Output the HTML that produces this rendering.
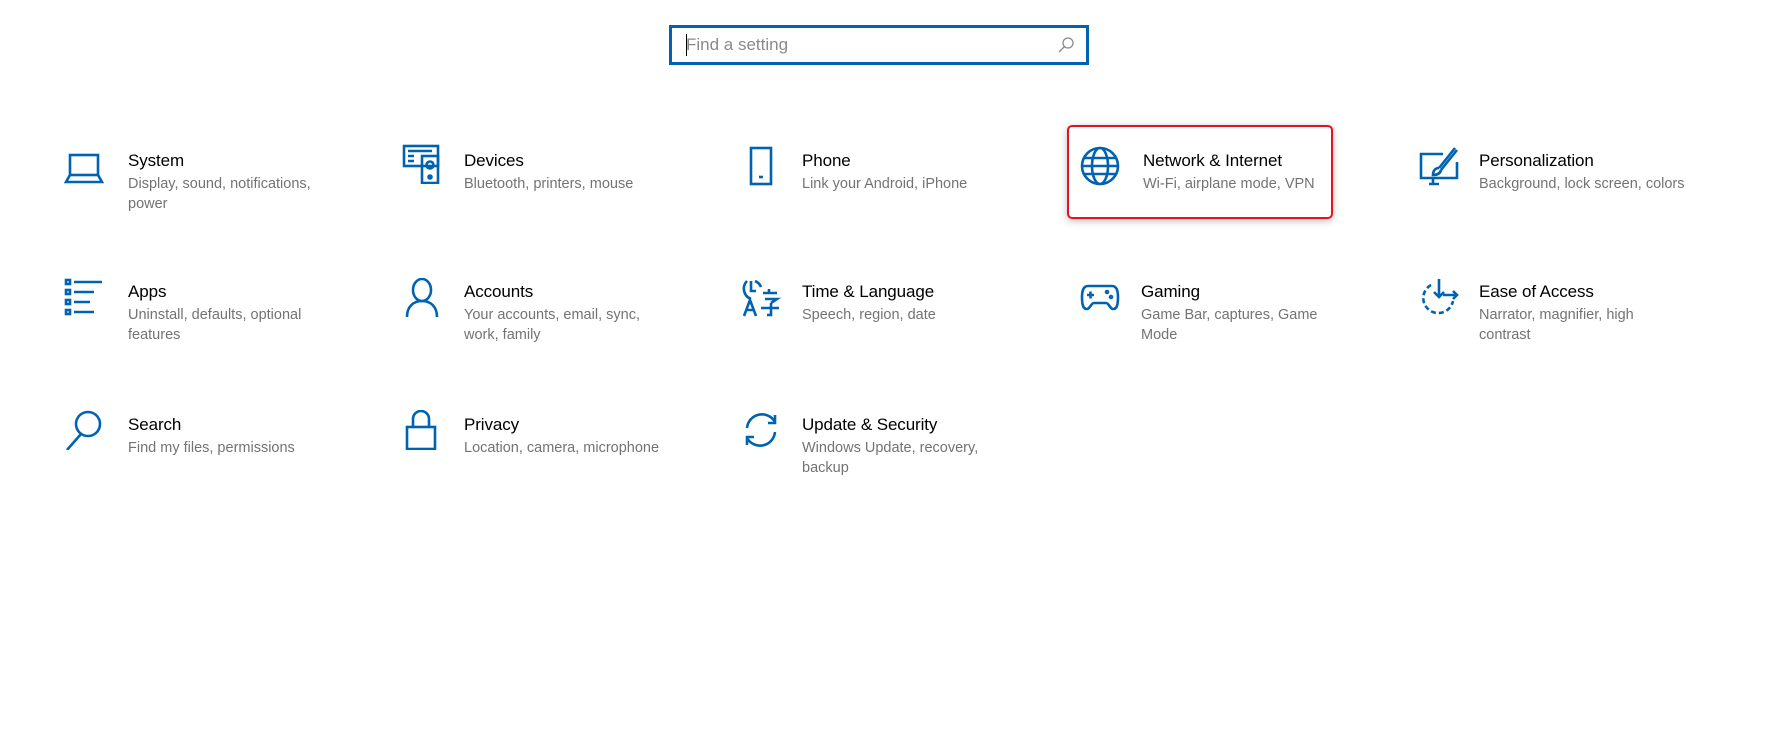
<!DOCTYPE html>
<html><head><meta charset="utf-8"><style>
body{margin:0;width:1770px;height:729px;background:#fff;position:relative;overflow:hidden;font-family:"Liberation Sans",sans-serif}
.search{position:absolute;left:669px;top:25px;width:414px;height:34px;border:3px solid #0063b1;}
.search .ph{position:absolute;left:14px;top:7px;font-size:17px;color:#8a8a8a}
.search .cur{position:absolute;left:14px;top:6px;width:1px;height:22px;background:#000}
.t{position:absolute}
.t .ti{font-size:17px;color:#000;line-height:22px;white-space:nowrap;letter-spacing:-0.1px}
.t .de{font-size:14.5px;color:#737373;line-height:20px;margin-top:2px}
svg.ic{position:absolute;width:40px;height:40px;fill:none;stroke:#0063b1;stroke-width:2.6}
.red{position:absolute;left:1067px;top:125px;width:262px;height:90px;border:2px solid #e81123;border-radius:5px;box-shadow:0 2px 8px rgba(0,0,0,.25)}
</style></head><body>
<div class="search"><div class="cur"></div><div class="ph">Find a setting</div>
<svg style="position:absolute;right:10px;top:7px" width="20" height="20" viewBox="0 0 20 20" fill="none" stroke="#8a8a8a" stroke-width="1.3"><circle cx="12" cy="8" r="5"/><line x1="8.5" y1="11.5" x2="3" y2="17"/></svg></div>
<div class="red"></div>

<svg class="ic" style="left:64px;top:148px" viewBox="0 0 40 40"><rect x="6" y="7" width="28" height="20"/><path d="M6 27 L2 34 H38 L34 27"/></svg>
<div class="t" style="left:128px;top:150px;width:200px"><div class="ti">System</div><div class="de">Display, sound, notifications, power</div></div>

<svg class="ic" style="left:402px;top:144px" viewBox="0 0 40 40"><rect x="2" y="2" width="34" height="20"/><path d="M6 7h24M6 12h6M6 17h6"/><rect x="20" y="12" width="16" height="27"/><circle cx="28" cy="21" r="3.5"/><circle cx="28" cy="33" r="1.5"/></svg>
<div class="t" style="left:464px;top:150px;width:230px"><div class="ti">Devices</div><div class="de">Bluetooth, printers, mouse</div></div>

<svg class="ic" style="left:741px;top:146px" viewBox="0 0 40 40"><rect x="10" y="2" width="20" height="36"/><line x1="18" y1="31" x2="22" y2="31"/></svg>
<div class="t" style="left:802px;top:150px;width:230px"><div class="ti">Phone</div><div class="de">Link your Android, iPhone</div></div>

<svg class="ic" style="left:1080px;top:146px" viewBox="0 0 40 40"><circle cx="20" cy="20" r="18"/><ellipse cx="20" cy="20" rx="8" ry="18"/><line x1="2" y1="20" x2="38" y2="20"/><line x1="4" y1="12" x2="36" y2="12"/><line x1="4" y1="28" x2="36" y2="28"/></svg>
<div class="t" style="left:1143px;top:150px;width:200px"><div class="ti">Network &amp; Internet</div><div class="de">Wi-Fi, airplane mode, VPN</div></div>

<svg class="ic" style="left:1419px;top:146px" viewBox="0 0 40 40"><path d="M24 8H2V32H38V16"/><path d="M14 32v6M10 38h10"/><path d="M36 2L20 22M38 4L22 24"/><path d="M20 22c-4 0-6 3-6 7 4 0 7-1 8-5"/></svg>
<div class="t" style="left:1479px;top:150px;width:280px"><div class="ti">Personalization</div><div class="de">Background, lock screen, colors</div></div>

<svg class="ic" style="left:64px;top:278px" viewBox="0 0 40 40"><rect x="2" y="2" width="4" height="4"/><rect x="2" y="12" width="4" height="4"/><rect x="2" y="22" width="4" height="4"/><rect x="2" y="32" width="4" height="4"/><path d="M10 4H38M10 14H30M10 24H26M10 34H30"/></svg>
<div class="t" style="left:128px;top:281px;width:200px"><div class="ti">Apps</div><div class="de">Uninstall, defaults, optional features</div></div>

<svg class="ic" style="left:402px;top:278px" viewBox="0 0 40 40"><ellipse cx="20" cy="12" rx="9" ry="11"/><path d="M5 39c0-10 6-16 15-16s15 6 15 16"/></svg>
<div class="t" style="left:464px;top:281px;width:200px"><div class="ti">Accounts</div><div class="de">Your accounts, email, sync, work, family</div></div>

<svg class="ic" style="left:741px;top:277px" viewBox="0 0 40 40" stroke-width="2.3"><path d="M6 4a11 11 0 0 0 4 18"/><path d="M10 4v10h5"/><path d="M14 4a11 11 0 0 1 6 6"/><path d="M3 39l6-16 6 16M5 33h8"/><path d="M22 16h14M24 22h12l-6 4M30 26v12h-4M20 31h18M28 12v4"/></svg>
<div class="t" style="left:802px;top:281px;width:230px"><div class="ti">Time &amp; Language</div><div class="de">Speech, region, date</div></div>

<svg class="ic" style="left:1080px;top:277px" viewBox="0 0 40 40"><path d="M8 9H32C36 9 38 13 38 20C38 30 36 32 33 32C30 32 29 26 26 26H14C11 26 10 32 7 32C4 32 2 30 2 20C2 13 4 9 8 9Z"/><path d="M7 18h7M10.5 14.5v7"/><circle cx="27" cy="15" r="1"/><circle cx="31" cy="20" r="1"/></svg>
<div class="t" style="left:1141px;top:281px;width:200px"><div class="ti">Gaming</div><div class="de">Game Bar, captures, Game Mode</div></div>

<svg class="ic" style="left:1419px;top:277px" viewBox="0 0 40 40"><path d="M12 8a15 15 0 1 0 22 16" stroke-dasharray="5 3"/><path d="M20 2v18M15 15l5 5 5-5M24 18h14M34 14l4 4-4 4"/></svg>
<div class="t" style="left:1479px;top:281px;width:200px"><div class="ti">Ease of Access</div><div class="de">Narrator, magnifier, high contrast</div></div>

<svg class="ic" style="left:64px;top:410px" viewBox="0 0 40 40"><circle cx="24" cy="14" r="12"/><line x1="17" y1="24" x2="3" y2="40"/></svg>
<div class="t" style="left:128px;top:414px;width:230px"><div class="ti">Search</div><div class="de">Find my files, permissions</div></div>

<svg class="ic" style="left:402px;top:410px" viewBox="0 0 40 40"><rect x="5" y="17" width="28" height="22"/><path d="M11 17V9a8 8 0 0 1 16 0v8"/></svg>
<div class="t" style="left:464px;top:414px;width:230px"><div class="ti">Privacy</div><div class="de">Location, camera, microphone</div></div>

<svg class="ic" style="left:741px;top:410px" viewBox="0 0 40 40"><path d="M6 18a15 15 0 0 1 28-6M34 5v8h-7"/><path d="M34 22a15 15 0 0 1-28 6M6 35v-8h7"/></svg>
<div class="t" style="left:802px;top:414px;width:200px"><div class="ti">Update &amp; Security</div><div class="de">Windows Update, recovery, backup</div></div>
</body></html>
